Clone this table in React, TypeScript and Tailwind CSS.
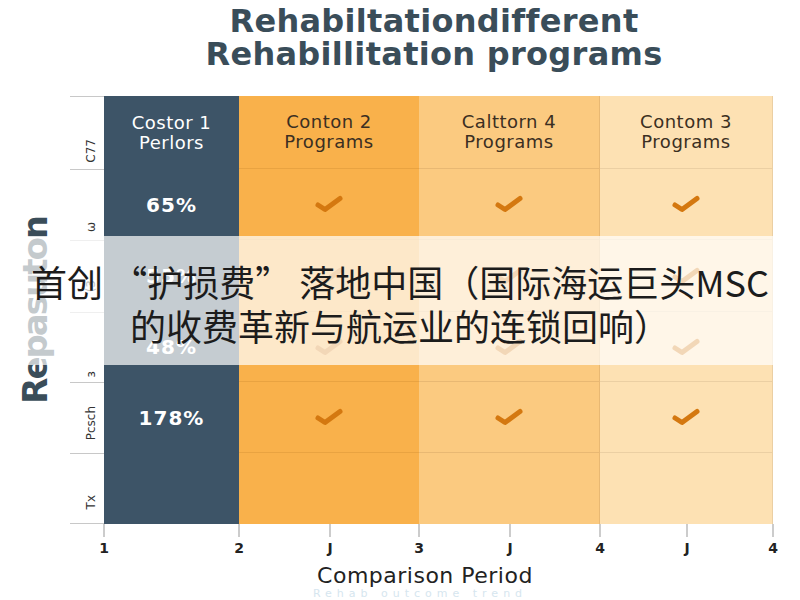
import React from "react";

type Cell = { text?: string; check?: boolean };

const heights = ["h-[73px]", "h-[71px]", "h-[72px]", "h-[70px]", "h-[71px]", "h-[71px]"];
const sideLabels = [
  { text: "C77", pad: "pb-[6px]" },
  { text: "ω", pad: "pb-[8px]" },
  { text: "(3", pad: "pb-[20px]" },
  { text: "з", pad: "pb-[5px]" },
  { text: "Pcsch", pad: "pb-[13px]" },
  { text: "Tx", pad: "pb-[14px]" },
];

const header = ["Costor 1\nPerlors", "Conton 2\nPrograms", "Calttorn 4\nPrograms", "Contom 3\nPrograms"];

const body: Cell[][] = [
  [{ text: "65%" }, { check: true }, { check: true }, { check: true }],
  [{ text: "55%" }, { check: true }, { check: true }, { check: true }],
  [{ text: "48%" }, { check: true }, { check: true }, { check: true }],
  [{ text: "178%" }, { check: true }, { check: true }, { check: true }],
  [{}, {}, {}, {}],
];

const colBg = [
  "bg-[#3d5467]",
  "bg-[#f9b14b] border-b border-[#e9a341]",
  "bg-[#fbca80] border-b border-r border-[#e8b873]",
  "bg-[#fde1b3] border-b border-r border-[#ebcfa3]",
];

const ticks = [
  { label: "1", w: "w-[135px]" },
  { label: "2", w: "w-[91px]" },
  { label: "J", w: "w-[89px]" },
  { label: "3", w: "w-[91px]" },
  { label: "J", w: "w-[90px]" },
  { label: "4", w: "w-[87px]" },
  { label: "J", w: "w-[86px]" },
  { label: "4", w: "w-0" },
];

function Check() {
  return (
    <svg width="32" height="22" viewBox="0 0 32 22" fill="none">
      <path d="M5 12 L12 16.5 L27 5.5" stroke="#d47810" strokeWidth="5" strokeLinecap="round" strokeLinejoin="round" />
    </svg>
  );
}

export default function App() {
  return (
    <div className="relative h-[600px] w-[800px] overflow-hidden bg-white font-['DejaVu_Sans',sans-serif] text-[#222]">
      <div className="h-[96px] pl-[68px] pt-[5px] text-center text-[32px] font-bold leading-[33px] tracking-[0.3px] text-[#3a4d59]">
        <div>Rehabiltationdifferent</div>
        <div>Rehabillitation programs</div>
      </div>

      <div className="flex h-[428px]">
        <div className="flex w-[70px] items-center justify-center">
          <span className="rotate-180 text-[34px] font-bold leading-[36px] tracking-[-2px] text-[#3a4d59] [writing-mode:vertical-rl]">
            Repasuton
          </span>
        </div>

        <div className="flex w-[34px] flex-col">
          {sideLabels.map((l, i) => (
            <div
              key={i}
              className={`flex items-end justify-end border-t border-[#c8c8c8] pr-[6px] ${heights[i]} ${l.pad} ${
                i === sideLabels.length - 1 ? "border-b" : ""
              }`}
            >
              <span className="rotate-180 text-[12px] leading-[13px] text-[#333] [writing-mode:vertical-rl]">{l.text}</span>
            </div>
          ))}
        </div>

        <div className="flex w-[669px] flex-col">
          <div className={`grid grid-cols-[135px_180px_181px_173px] ${heights[0]}`}>
            {header.map((h, c) => (
              <div
                key={c}
                className={`flex items-center justify-center whitespace-pre-line text-center text-[18px] leading-[20px] tracking-[0.5px] ${colBg[c]} ${
                  c === 0 ? "text-white" : "text-[#3b2f22]"
                }`}
              >
                {h}
              </div>
            ))}
          </div>
          {body.map((row, r) => (
            <div key={r} className={`grid grid-cols-[135px_180px_181px_173px] ${heights[r + 1]}`}>
              {row.map((cell, c) => (
                <div
                  key={c}
                  className={`flex items-center justify-center ${colBg[c]} ${r === body.length - 1 ? "border-b-0" : ""}`}
                >
                  {cell.text ? (
                    <span className="text-[20px] font-bold tracking-[1px] text-white">{cell.text}</span>
                  ) : null}
                  {cell.check ? <Check /> : null}
                </div>
              ))}
            </div>
          ))}
        </div>
      </div>

      <div className="flex h-[40px] pl-[104px]">
        {ticks.map((t, i) => (
          <div key={i} className={`relative h-full ${t.w}`}>
            <div className="h-[13px] w-px -translate-x-1/2 bg-[#9a9a9a]" />
            <span className="absolute left-0 top-[14px] -translate-x-1/2 text-[14px] font-bold text-[#222]">{t.label}</span>
          </div>
        ))}
      </div>

      <div className="pl-[50px] text-center text-[22px] font-medium leading-[24px] tracking-[0.5px] text-[#222]">
        Comparison Period
      </div>
      <div className="pl-[40px] text-center text-[11px] leading-[12px] tracking-[5px] text-[#d6e6ef]">
        Rehab outcome trend
      </div>

      <div className="absolute left-0 right-0 top-[236px] flex h-[129px] flex-col items-center justify-center bg-white/70 pt-[4px] text-center font-['Noto_Sans_CJK_SC',sans-serif] text-[36px] leading-[44px] text-[#1c1c1c]">
        <div className="whitespace-nowrap">首创 “护损费” 落地中国（国际海运巨头MSC</div>
        <div className="whitespace-nowrap">的收费革新与航运业的连锁回响）</div>
      </div>
    </div>
  );
}
